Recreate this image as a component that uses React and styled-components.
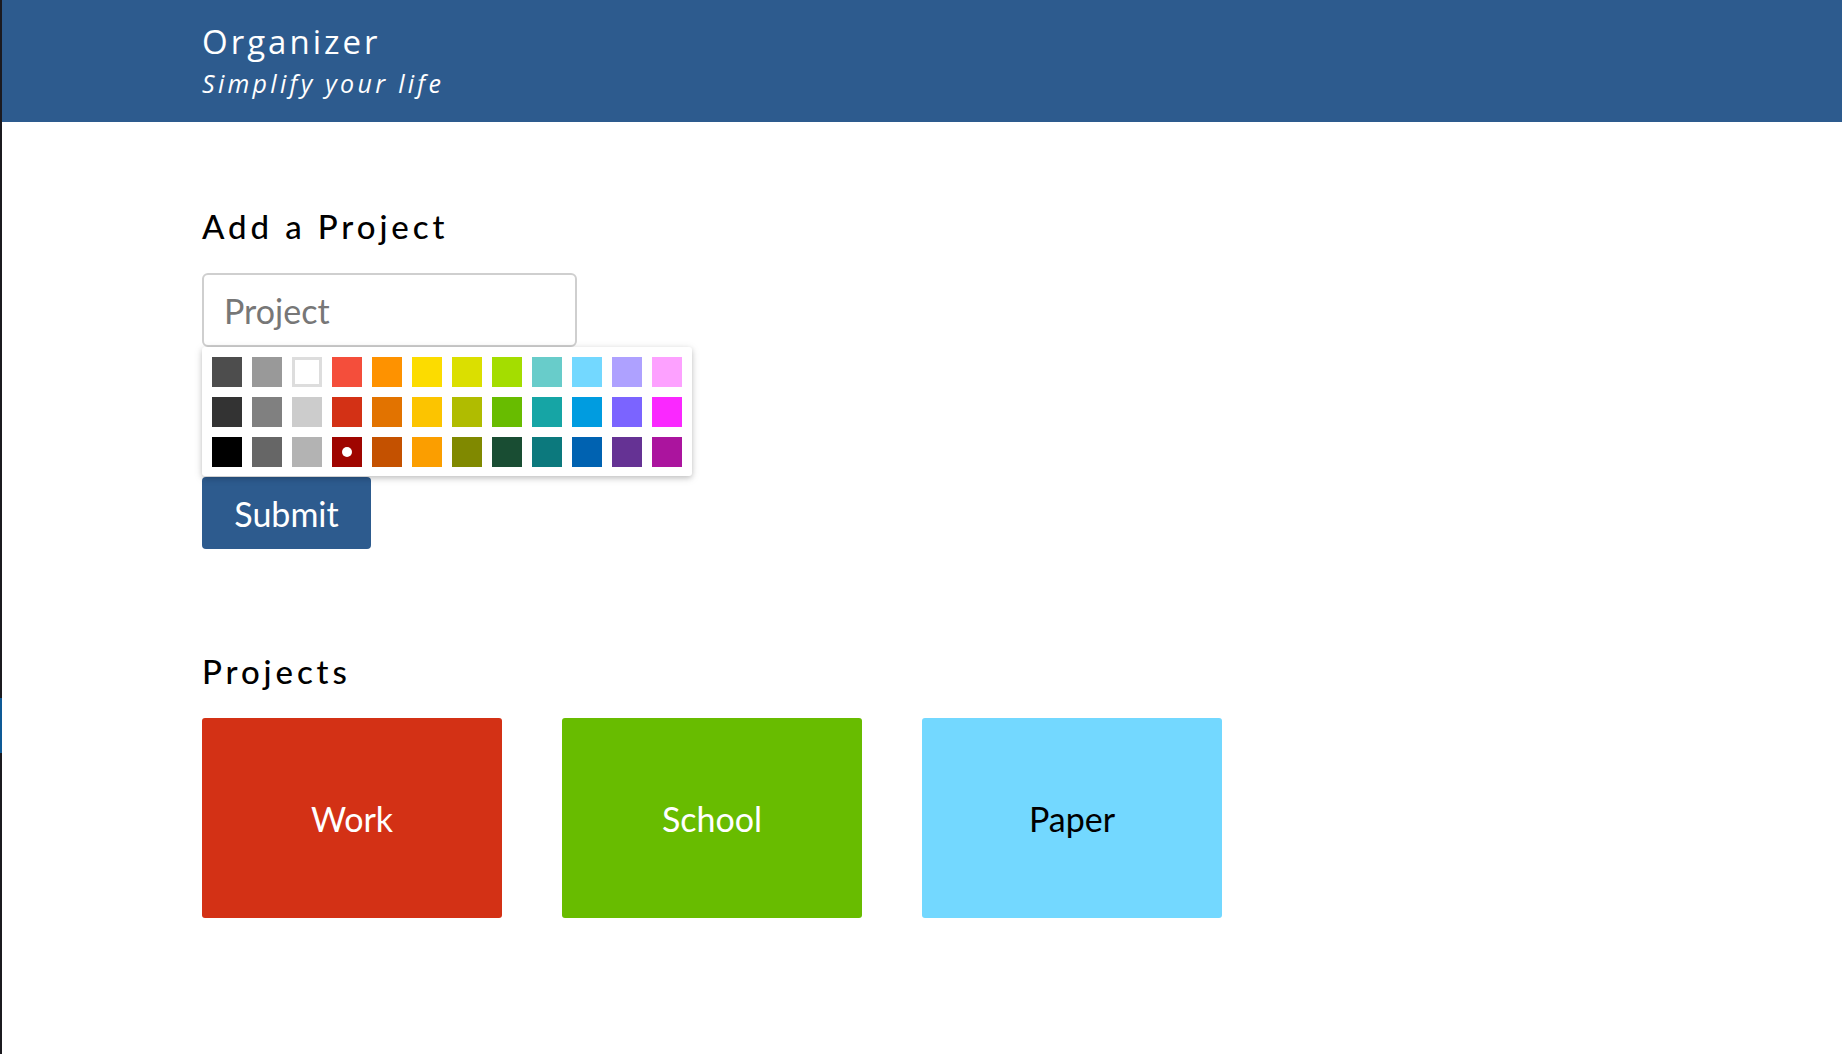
import React from "react";
import styled, { createGlobalStyle } from "styled-components";

const GlobalStyle = createGlobalStyle`
  html, body { margin: 0; padding: 0; background: #ffffff; }
  body { font-family: "Lato", "Open Sans", sans-serif; }
  * { box-sizing: border-box; }
`;

const Page = styled.div`
  display: flex;
  min-height: 1054px;
`;

const EdgeStrip = styled.div`
  width: 2px;
  flex: 0 0 2px;
  display: flex;
  flex-direction: column;
  background: #1b1a1f;
`;

const EdgeMark = styled.div`
  margin-top: 698px;
  height: 55px;
  background: #0e5a96;
`;

const Main = styled.div`
  flex: 1;
  display: flex;
  flex-direction: column;
`;

const Header = styled.header`
  height: 122px;
  background: #2d5b8e;
  padding: 21px 0 0 200px;
  color: #ffffff;
  font-family: "Open Sans", "DejaVu Sans", sans-serif;
`;

const Title = styled.h1`
  margin: 0;
  font-size: 33px;
  font-weight: 500;
  letter-spacing: 3px;
  line-height: 42px;
`;

const Tagline = styled.div`
  margin-top: 3px;
  font-size: 25px;
  font-style: italic;
  letter-spacing: 3.3px;
  line-height: 34px;
`;

const Content = styled.div`
  padding: 0 0 0 200px;
  display: flex;
  flex-direction: column;
  align-items: flex-start;
`;

const SectionTitle = styled.h2`
  margin: ${(p) => p.$top}px 0 0 0;
  font-family: "Lato", sans-serif;
  font-size: 33px;
  font-weight: 500;
  letter-spacing: 3.9px;
  line-height: 40px;
  color: #000;
`;

const Input = styled.input`
  margin-top: 27px;
  width: 375px;
  height: 74px;
  border: 2px solid #cfcfcf;
  border-radius: 6px;
  padding: 0 20px;
  font-family: "Lato", sans-serif;
  font-size: 34px;
  color: #333;
  outline: none;
  &::placeholder { color: #777777; }
`;

const Palette = styled.div`
  width: 490px;
  padding: 10px 10px 9px 10px;
  background: #ffffff;
  border-radius: 3px;
  box-shadow: 0 2px 10px rgba(0, 0, 0, 0.12), 0 2px 5px rgba(0, 0, 0, 0.16);
  display: grid;
  grid-template-columns: repeat(12, 30px);
  grid-auto-rows: 30px;
  gap: 10px;
  position: relative;
  z-index: 1;
`;

const Swatch = styled.div`
  width: 30px;
  height: 30px;
  background: ${(p) => p.$color};
  box-shadow: ${(p) => (p.$light ? "inset 0 0 0 3px #dddddd" : "none")};
  display: flex;
  align-items: center;
  justify-content: center;
`;

const Dot = styled.div`
  width: 10px;
  height: 10px;
  border-radius: 50%;
  background: #ffffff;
`;

const SubmitButton = styled.button`
  margin-top: 1px;
  width: 169px;
  height: 72px;
  border: none;
  border-radius: 4px;
  background: #2d5b8e;
  color: #ffffff;
  font-family: "Lato", sans-serif;
  font-size: 34px;
  padding: 0;
  cursor: pointer;
`;

const Cards = styled.div`
  margin-top: 27px;
  display: flex;
  gap: 60px;
`;

const Card = styled.div`
  width: 300px;
  height: 200px;
  border-radius: 3px;
  background: ${(p) => p.$color};
  color: ${(p) => (p.$dark ? "#000000" : "#ffffff")};
  display: flex;
  align-items: center;
  justify-content: center;
  font-family: "Lato", sans-serif;
  font-size: 34px;
`;

const COLORS = [
  "#4D4D4D", "#999999", "#FFFFFF", "#F44E3B", "#FE9200", "#FCDC00", "#DBDF00", "#A4DD00", "#68CCCA", "#73D8FF", "#AEA1FF", "#FDA1FF",
  "#333333", "#808080", "#CCCCCC", "#D33115", "#E27300", "#FCC400", "#B0BC00", "#68BC00", "#16A5A5", "#009CE0", "#7B64FF", "#FA28FF",
  "#000000", "#666666", "#B3B3B3", "#9F0500", "#C45100", "#FB9E00", "#808900", "#194D33", "#0C797D", "#0062B1", "#653294", "#AB149E",
];

const PROJECTS = [
  { name: "Work", color: "#D33115", dark: false },
  { name: "School", color: "#68BC00", dark: false },
  { name: "Paper", color: "#73D8FF", dark: true },
];

export default function App() {
  return (
    <>
      <GlobalStyle />
      <Page>
        <EdgeStrip>
          <EdgeMark />
        </EdgeStrip>
        <Main>
          <Header>
            <Title>Organizer</Title>
            <Tagline>Simplify your life</Tagline>
          </Header>
          <Content>
            <SectionTitle $top={84}>Add a Project</SectionTitle>
            <Input placeholder="Project" />
            <Palette>
              {COLORS.map((c) => (
                <Swatch key={c} $color={c} $light={c === "#FFFFFF"}>
                  {c === "#9F0500" && <Dot />}
                </Swatch>
              ))}
            </Palette>
            <SubmitButton>Submit</SubmitButton>
            <SectionTitle $top={102}>Projects</SectionTitle>
            <Cards>
              {PROJECTS.map((p) => (
                <Card key={p.name} $color={p.color} $dark={p.dark}>
                  {p.name}
                </Card>
              ))}
            </Cards>
          </Content>
        </Main>
      </Page>
    </>
  );
}
